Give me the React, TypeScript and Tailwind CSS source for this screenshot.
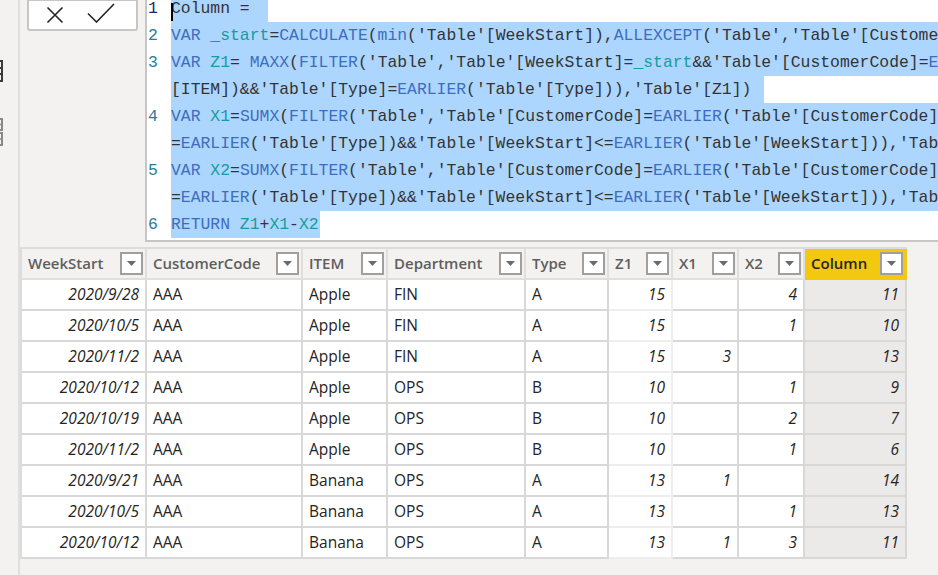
import React from "react";

const B = "text-[#3d6dbd]";
const T = "text-[#169c9c]";

type Seg = [string, string?];

function Code({ segs }: { segs: Seg[] }) {
  return (
    <>
      {segs.map((s, i) => (
        <span key={i} className={s[1] ?? ""}>
          {s[0]}
        </span>
      ))}
    </>
  );
}

const lines: { num?: string; segs: Seg[]; sel: string; active?: boolean }[] = [
  { num: "1", active: true, sel: "w-[97px]", segs: [["Column = "]] },
  {
    num: "2",
    sel: "full",
    segs: [
      ["VAR", B],
      [" _start", T],
      ["="],
      ["CALCULATE", B],
      ["("],
      ["min", B],
      ["('Table'[WeekStart]),"],
      ["ALLEXCEPT", B],
      ["('Table','Table'[CustomerCode],'Table'[ITEM],'Table'[Type]))"],
    ],
  },
  {
    num: "3",
    sel: "full",
    segs: [
      ["VAR", B],
      [" Z1", T],
      ["= "],
      ["MAXX", B],
      ["("],
      ["FILTER", B],
      ["('Table','Table'[WeekStart]="],
      ["_start", T],
      ["&&'Table'[CustomerCode]="],
      ["EARLIER", B],
      ["('Table'[CustomerCode])&&'Table'"],
    ],
  },
  {
    sel: "w-[593px]",
    segs: [
      ["[ITEM])&&'Table'[Type]="],
      ["EARLIER", B],
      ["('Table'[Type])),'Table'[Z1])"],
    ],
  },
  {
    num: "4",
    sel: "full",
    segs: [
      ["VAR", B],
      [" X1", T],
      ["="],
      ["SUMX", B],
      ["("],
      ["FILTER", B],
      ["('Table','Table'[CustomerCode]="],
      ["EARLIER", B],
      ["('Table'[CustomerCode])&&'Table'[Type]"],
    ],
  },
  {
    sel: "full",
    segs: [
      ["="],
      ["EARLIER", B],
      ["('Table'[Type])&&'Table'[WeekStart]<="],
      ["EARLIER", B],
      ["('Table'[WeekStart])),'Table'[X1])"],
    ],
  },
  {
    num: "5",
    sel: "full",
    segs: [
      ["VAR", B],
      [" X2", T],
      ["="],
      ["SUMX", B],
      ["("],
      ["FILTER", B],
      ["('Table','Table'[CustomerCode]="],
      ["EARLIER", B],
      ["('Table'[CustomerCode])&&'Table'[Type]"],
    ],
  },
  {
    sel: "full",
    segs: [
      ["="],
      ["EARLIER", B],
      ["('Table'[Type])&&'Table'[WeekStart]<="],
      ["EARLIER", B],
      ["('Table'[WeekStart])),'Table'[X2])"],
    ],
  },
  {
    num: "6",
    sel: "w-[149px]",
    segs: [
      ["RETURN", B],
      [" Z1", T],
      ["+"],
      ["X1", T],
      ["-"],
      ["X2", T],
    ],
  },
];

const cols = [
  { name: "WeekStart", w: "w-[125px]", right: true },
  { name: "CustomerCode", w: "w-[156px]" },
  { name: "ITEM", w: "w-[85px]" },
  { name: "Department", w: "w-[138px]" },
  { name: "Type", w: "w-[83px]" },
  { name: "Z1", w: "w-[64px]", right: true },
  { name: "X1", w: "w-[66px]", right: true },
  { name: "X2", w: "w-[66px]", right: true },
  { name: "Column", w: "w-[102px]", right: true },
];

const rows: string[][] = [
  ["2020/9/28", "AAA", "Apple", "FIN", "A", "15", "", "4", "11"],
  ["2020/10/5", "AAA", "Apple", "FIN", "A", "15", "", "1", "10"],
  ["2020/11/2", "AAA", "Apple", "FIN", "A", "15", "3", "", "13"],
  ["2020/10/12", "AAA", "Apple", "OPS", "B", "10", "", "1", "9"],
  ["2020/10/19", "AAA", "Apple", "OPS", "B", "10", "", "2", "7"],
  ["2020/11/2", "AAA", "Apple", "OPS", "B", "10", "", "1", "6"],
  ["2020/9/21", "AAA", "Banana", "OPS", "A", "13", "1", "", "14"],
  ["2020/10/5", "AAA", "Banana", "OPS", "A", "13", "", "1", "13"],
  ["2020/10/12", "AAA", "Banana", "OPS", "A", "13", "1", "3", "11"],
];

function Drop() {
  return (
    <div className="w-[23px] h-[23px] border-2 border-[#a19f9d] bg-white flex items-center justify-center shrink-0">
      <svg width="9" height="5" viewBox="0 0 9 5">
        <path d="M0 0 H9 L4.5 5 Z" fill="#6b6b6b" />
      </svg>
    </div>
  );
}

export default function App() {
  return (
    <div className="w-[938px] h-[575px] bg-[#f3f2f1] flex overflow-hidden" style={{ fontFamily: '"Open Sans", "Noto Sans", sans-serif' }}>
      {/* left strip */}
      <div className="w-[20px] shrink-0 border-r-2 border-[#e1dfdd] flex flex-col overflow-hidden">
        <div className="mt-[60px] -ml-[16px]">
          <svg width="19" height="22" viewBox="0 0 19 22">
            <rect x="1" y="1" width="17" height="20" fill="none" stroke="#3b3a39" strokeWidth="2" />
            <path d="M1 8 H18 M1 14 H18" stroke="#3b3a39" strokeWidth="2" />
          </svg>
        </div>
        <div className="mt-[36px] -ml-[16px]">
          <svg width="19" height="28" viewBox="0 0 19 28">
            <rect x="1" y="1" width="17" height="11" fill="none" stroke="#8a8886" strokeWidth="2" />
            <rect x="1" y="15" width="17" height="12" fill="none" stroke="#8a8886" strokeWidth="2" />
            <path d="M1 6.5 H18 M1 21 H18" stroke="#8a8886" strokeWidth="1.5" />
          </svg>
        </div>
      </div>

      {/* main */}
      <div className="flex-1 flex flex-col min-w-0">
        {/* formula bar */}
        <div className="h-[242px] flex shrink-0">
          <div className="w-[125px] shrink-0 pl-[7px]">
            <div className="w-[111px] h-[32px] -mt-[1px] bg-white border-2 border-[#c8c6c4] rounded-b-[3px] flex items-center">
              <svg className="ml-[17px]" width="18" height="18" viewBox="0 0 18 18">
                <path d="M1.5 1.5 L16.5 16.5 M16.5 1.5 L1.5 16.5" stroke="#252423" strokeWidth="1.6" />
              </svg>
              <svg className="ml-[23px] -mt-[4px]" width="28" height="20" viewBox="0 0 28 20">
                <path d="M1 10.5 L9.5 19 L27 1" fill="none" stroke="#252423" strokeWidth="1.6" />
              </svg>
            </div>
          </div>
          <div className="flex-1 bg-white border-l-2 border-b-2 border-[#c8c6c4] overflow-hidden min-w-0 relative">
            <div
              className="-mt-[5px] text-[16.4px] leading-[27px] text-[#333333]"
              style={{ fontFamily: '"Liberation Mono", "DejaVu Sans Mono", monospace' }}
            >
              {lines.map((l, i) => (
                <div key={i} className="flex h-[27px] whitespace-nowrap">
                  <div className={`w-[24px] shrink-0 pl-[1px] ${l.active ? "text-[#14296e]" : "text-[#2b7b97]"}`}>
                    {l.num ?? ""}
                  </div>
                  {l.sel === "full" ? (
                    <div className="flex-1 bg-[#add6ff] whitespace-nowrap">
                      <Code segs={l.segs} />
                    </div>
                  ) : (
                    <div className={`${l.sel} shrink-0 bg-[#add6ff] whitespace-nowrap relative`}>
                      {l.active && <span className="absolute left-0 top-[8px] w-[2px] h-[18px] bg-black" />}
                      <Code segs={l.segs} />
                    </div>
                  )}
                </div>
              ))}
            </div>
          </div>
        </div>

        {/* table */}
        <div className="mt-[5px] flex">
          <div className="border-l-2 border-t-2 border-[#dcdcdc] flex flex-col">
            <div className="flex h-[31px]">
              {cols.map((c) => {
                const isCol = c.name === "Column";
                return (
                  <div
                    key={c.name}
                    className={`${c.w} shrink-0 h-full flex items-center justify-between pl-[6px] pr-[2px] border-r-2 border-b-2 ${
                      isCol ? "bg-[#f2c811] border-[#f2c811] text-[#252423]" : "bg-[#f3f2f1] border-[#e1dfdd] text-[#605e5c]"
                    } text-[15px] font-semibold`}
                  >
                    <span>{c.name}</span>
                    <Drop />
                  </div>
                );
              })}
            </div>
            {rows.map((r, ri) => (
              <div key={ri} className="flex h-[31px]">
                {r.map((v, ci) => {
                  const c = cols[ci];
                  const isCol = ci === 8;
                  const borderR = ci === 5 ? "border-[#eeeeee]" : "border-[#d8d8d8]";
                  return (
                    <div
                      key={ci}
                      className={`${c.w} shrink-0 h-full flex items-center border-r-2 border-b-2 ${borderR} ${
                        isCol ? "bg-[#ebeae9]" : "bg-white"
                      } ${c.right ? "justify-end pr-[6px] italic" : "pl-[6px]"} text-[15.5px] text-[#252423]`}
                    >
                      <span>{v}</span>
                    </div>
                  );
                })}
              </div>
            ))}
          </div>
        </div>
      </div>
    </div>
  );
}
